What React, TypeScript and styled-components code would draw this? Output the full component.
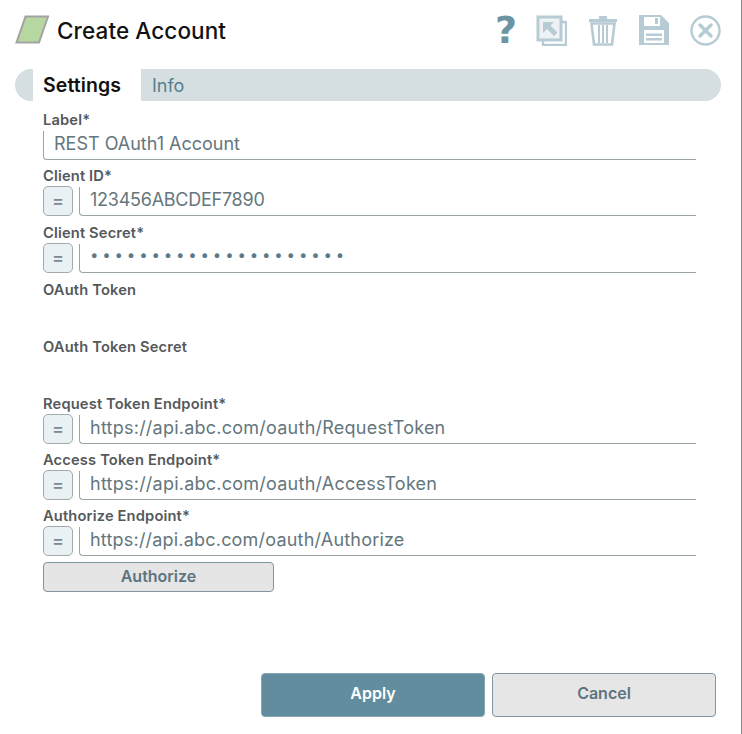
import React from "react";
import styled, { createGlobalStyle } from "styled-components";

const Global = createGlobalStyle`
  html, body { margin: 0; padding: 0; background: #fff; }
  body { font-family: Inter, "Noto Sans", sans-serif; }
`;

const Dialog = styled.div`
  width: 742px;
  height: 734px;
  box-sizing: border-box;
  border-right: 1px solid #8a8a8a;
  padding: 12px 20px 0 15px;
  display: flex;
  flex-direction: column;
  overflow: hidden;
`;
const Header = styled.header`
  display: flex;
  align-items: center;
  height: 36px;
  flex: none;
`;
const Title = styled.h1`
  margin: 0 0 0 7px;
  font-size: 22.5px;
  line-height: 37px;
  font-weight: 500;
  letter-spacing: 0.1px;
  color: #111;
  flex: 1;
`;
const Tools = styled.div`
  display: flex;
  align-items: center;
  gap: 21px;
`;
const HelpMark = styled.span`
  font-family: "DejaVu Sans", sans-serif;
  font-weight: 700;
  font-size: 38px;
  line-height: 36px;
  color: #6d94a3;
  margin-right: -2px;
`;
const ToolSlot = styled.span<{ $gap?: number }>`
  display: flex;
  margin-right: ${(p) => p.$gap ?? 0}px;
`;
const Tabs = styled.nav`
  margin-top: 21px;
  height: 32px;
  flex: none;
  border-radius: 16px;
  background: #d5dee1;
  padding-left: 18px;
  display: flex;
`;
const Tab = styled.div<{ $active?: boolean }>`
  width: ${(p) => (p.$active ? "108px" : "auto")};
  padding-left: ${(p) => (p.$active ? "10px" : "11px")};
  box-sizing: border-box;
  background: ${(p) => (p.$active ? "#fff" : "transparent")};
  color: ${(p) => (p.$active ? "#111" : "#55808f")};
  font-size: ${(p) => (p.$active ? "19.5px" : "18px")};
  font-weight: ${(p) => (p.$active ? 600 : 400)};
  letter-spacing: ${(p) => (p.$active ? "0.1px" : "0")};
  line-height: 33px;
`;
const Form = styled.main`
  margin-left: 28px;
  padding-top: 1px;
  width: 653px;
  display: flex;
  flex-direction: column;
  flex: none;
`;
const Field = styled.div<{ $height: number }>`
  height: ${(p) => p.$height}px;
  flex: none;
`;
const Label = styled.div`
  font-size: 14.7px;
  line-height: 16px;
  font-weight: 600;
  letter-spacing: 0.15px;
  color: #55595c;
  padding-top: 10px;
`;
const Row = styled.div`
  display: flex;
  align-items: flex-start;
  gap: 6px;
`;
const ExprButton = styled.div`
  width: 30px;
  height: 30px;
  box-sizing: border-box;
  flex: none;
  margin-top: 2px;
  border: 1.5px solid #a3a9ab;
  border-radius: 5px;
  background: #eaf1f4;
  color: #7b8a90;
  font-size: 18px;
  line-height: 27px;
  text-align: center;
  font-weight: 500;
`;
const Input = styled.div<{ $spacing: number; $dots?: boolean }>`
  flex: 1;
  height: 29px;
  box-sizing: border-box;
  margin-top: 3px;
  border-left: 1px solid #9aa5a9;
  border-bottom: 1px solid #9aa5a9;
  border-bottom-left-radius: 4px;
  padding-left: 10px;
  font-size: ${(p) => (p.$dots ? "15px" : "18px")};
  line-height: ${(p) => (p.$dots ? "21px" : "25px")};
  color: ${(p) => (p.$dots ? "#5c7a87" : "#64767d")};
  white-space: nowrap;
  letter-spacing: ${(p) => p.$spacing}px;
`;
const Wide = styled.div`
  width: 231px;
  height: 30px;
  margin-top: 8px;
  box-sizing: border-box;
  border: 1px solid #7f959e;
  border-radius: 4px;
  background: #e5e5e5;
  color: #5d7480;
  font-size: 16px;
  font-weight: 600;
  line-height: 27px;
  text-align: center;
`;
const Footer = styled.footer`
  margin-top: 81px;
  margin-left: 246px;
  display: flex;
  gap: 7px;
`;
const FootButton = styled.div<{ $primary?: boolean }>`
  width: 224px;
  height: 44px;
  box-sizing: border-box;
  border: 1px solid ${(p) => (p.$primary ? "#88a6b2" : "#7f959e")};
  border-radius: 4px;
  background: ${(p) => (p.$primary ? "#618d9e" : "#e6e6e6")};
  color: ${(p) => (p.$primary ? "#fff" : "#5d7480")};
  font-size: 16px;
  font-weight: 600;
  line-height: 38px;
  text-align: center;
`;

const Logo = () => (
  <svg width="35" height="30" viewBox="0 0 35 30">
    <polygon points="10.5,1.5 33,1.5 24,27.5 1.5,27.5" fill="#b7d7a1" stroke="#a3a3a3" strokeWidth="2" />
  </svg>
);
const c = "#b6cbd3";
const ExportIcon = () => (
  <svg width="31" height="31" viewBox="0 0 31 31">
    <path d="M2 2h23v23H2z" fill="#eef2f4" stroke={c} strokeWidth="3" />
    <path d="M25 7h5v23H7v-5" fill="none" stroke={c} strokeWidth="2.4" />
    <path d="M7 7h11l-3.5 3.5 7 7-3.5 3.5-7-7L7 18z" fill={c} />
  </svg>
);
const TrashIcon = () => (
  <svg width="28" height="31" viewBox="0 0 28 31">
    <path d="M0 4h28v3H0zM10 1h8v3h-8z" fill={c} />
    <path d="M2.5 8.5h23L23 29.5H5z" fill="none" stroke={c} strokeWidth="2.6" />
    <path d="M10 10v18M14 10v18M18 10v18" stroke={c} strokeWidth="2" />
  </svg>
);
const SaveIcon = () => (
  <svg width="30" height="30" viewBox="0 0 30 30">
    <path fillRule="evenodd" d="M0 0h22l8 8v22H0zM5 2v9h16V2zM16 3h3v6h-3zM5 15v13h20V15z" fill={c} />
    <path d="M7 18.5h16v2.4H7zM7 23h16v2.4H7z" fill={c} />
  </svg>
);
const CloseIcon = () => (
  <svg width="31" height="31" viewBox="0 0 31 31">
    <circle cx="15.5" cy="15.5" r="14" fill="none" stroke={c} strokeWidth="2.4" />
    <path d="M10 10l11 11M21 10L10 21" stroke={c} strokeWidth="3.4" strokeLinecap="round" />
  </svg>
);

const fields = [
  { h: 56, label: "Label*", value: "REST OAuth1 Account", spacing: 0 },
  { h: 57, label: "Client ID*", value: "123456ABCDEF7890", expr: true, spacing: -0.25 },
  { h: 57, label: "Client Secret*", value: "•••••••••••••••••••••", expr: true, dots: true, spacing: 3.85 },
  { h: 57, label: "OAuth Token" },
  { h: 57, label: "OAuth Token Secret" },
  { h: 56, label: "Request Token Endpoint*", value: "https://api.abc.com/oauth/RequestToken", expr: true, spacing: 0.24 },
  { h: 56, label: "Access Token Endpoint*", value: "https://api.abc.com/oauth/AccessToken", expr: true, spacing: 0.24 },
  { h: 56, label: "Authorize Endpoint*", value: "https://api.abc.com/oauth/Authorize", expr: true, spacing: 0.2 },
];

export default function App() {
  return (
    <>
      <Global />
      <Dialog>
        <Header>
          <Logo />
          <Title>Create Account</Title>
          <Tools>
            <HelpMark>?</HelpMark>
            <ToolSlot $gap={1}><ExportIcon /></ToolSlot>
            <ToolSlot $gap={1}><TrashIcon /></ToolSlot>
            <ToolSlot><SaveIcon /></ToolSlot>
            <ToolSlot><CloseIcon /></ToolSlot>
          </Tools>
        </Header>
        <Tabs>
          <Tab $active>Settings</Tab>
          <Tab>Info</Tab>
        </Tabs>
        <Form>
          {fields.map((f) => (
            <Field key={f.label} $height={f.h}>
              <Label>{f.label}</Label>
              {f.value && (
                <Row>
                  {f.expr && <ExprButton>=</ExprButton>}
                  <Input $dots={f.dots} $spacing={f.spacing ?? 0}>{f.value}</Input>
                </Row>
              )}
            </Field>
          ))}
          <Wide>Authorize</Wide>
        </Form>
        <Footer>
          <FootButton $primary>Apply</FootButton>
          <FootButton>Cancel</FootButton>
        </Footer>
      </Dialog>
    </>
  );
}
